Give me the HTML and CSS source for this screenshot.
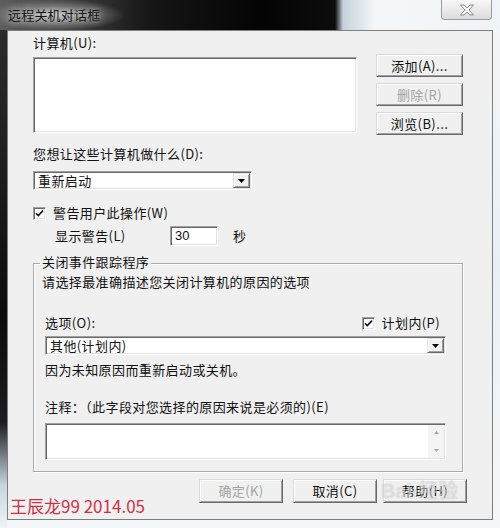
FILE: index.html
```html
<!DOCTYPE html>
<html lang="zh-CN">
<head>
<meta charset="utf-8">
<title>远程关机对话框</title>
<link rel="stylesheet" href="styles.css">
</head>
<body>
<div class="window">
  <div class="titlebar">
    <span class="title">远程关机对话框</span>
    <div class="close">
      <svg width="16" height="12" viewBox="0 0 16 12"><path d="M1.5 1 H5 L8 4 L11 1 H14.5 L10 6 L14.5 11 H11 L8 8 L5 11 H1.5 L6 6 Z" fill="#fbfbfb" stroke="#8a8a8a" stroke-width="1"/></svg>
    </div>
  </div>
  <div class="client">
    <div class="label l-computers">计算机(U):</div>
    <div class="top">
      <div class="listbox"></div>
      <div class="side-buttons">
        <div class="btn side">添加(A)...</div>
        <div class="btn side disabled">删除(R)</div>
        <div class="btn side">浏览(B)...</div>
      </div>
    </div>
    <div class="label l-action">您想让这些计算机做什么(D):</div>
    <div class="combo combo-action">
      <span class="combo-text">重新启动</span>
      <span class="combo-arrow"><svg width="7" height="4" viewBox="0 0 7 4"><path d="M0 0H7L3.5 4Z" fill="#000"/></svg></span>
    </div>
    <div class="check-row warn-row">
      <span class="checkbox"><svg width="9" height="9" viewBox="0 0 9 9"><path d="M1 4.2 L3.3 6.6 L8 1.6" fill="none" stroke="#111" stroke-width="1.6"/></svg></span>
      <span class="label">警告用户此操作(W)</span>
    </div>
    <div class="timeout-row">
      <span class="label timeout-label">显示警告(L)</span>
      <span class="textbox">30</span>
      <span class="label unit">秒</span>
    </div>
    <div class="group">
      <div class="legend">关闭事件跟踪程序</div>
      <div class="label desc">请选择最准确描述您关闭计算机的原因的选项</div>
      <div class="option-row">
        <span class="label">选项(O):</span>
        <span class="check-row planned">
          <span class="checkbox"><svg width="9" height="9" viewBox="0 0 9 9"><path d="M1 4.2 L3.3 6.6 L8 1.6" fill="none" stroke="#111" stroke-width="1.6"/></svg></span>
          <span class="label">计划内(P)</span>
        </span>
      </div>
      <div class="combo combo-reason">
        <span class="combo-text">其他(计划内)</span>
        <span class="combo-arrow"><svg width="7" height="4" viewBox="0 0 7 4"><path d="M0 0H7L3.5 4Z" fill="#000"/></svg></span>
      </div>
      <div class="label reason-desc">因为未知原因而重新启动或关机。</div>
      <div class="label comment-label">注释：（此字段对您选择的原因来说是必须的)(E)</div>
      <div class="memo">
        <div class="memo-scroll">
          <svg width="5" height="3" viewBox="0 0 5 3"><path d="M0 3H5L2.5 0Z" fill="#a8a8a8"/></svg>
          <svg width="5" height="3" viewBox="0 0 5 3"><path d="M0 0H5L2.5 3Z" fill="#a8a8a8"/></svg>
        </div>
      </div>
    </div>
    <div class="bottom-row">
      <span class="signature">王辰龙99 2014.05</span>
      <div class="dialog-buttons">
        <div class="btn dlg disabled">确定(K)</div>
        <div class="btn dlg cancel">取消(C)</div>
        <div class="btn dlg help">帮助(H)</div>
      </div>
    </div>
    <div class="baidu-mark">Bai<span class="paw">●</span>经验</div>
  </div>
</div>
</body>
</html>
```
FILE: styles.css
```css
html, body {
  margin: 0;
  padding: 0;
}

body {
  width: 500px;
  height: 528px;
  overflow: hidden;
  font-family: "Noto Sans CJK SC", "Liberation Sans", sans-serif;
  font-size: 13px;
  color: #111;
}

.window {
  width: 500px;
  height: 528px;
  display: flex;
  flex-direction: column;
  background:
    linear-gradient(180deg, #2e2e2e 0, #1c1c1c 35%, #0b0b0b 60%, #1a1d22 80%, #c9d6df 92%, #eef3f6 100%) 0 0 / 7px 100% no-repeat,
    linear-gradient(180deg, #f3f6f8 0, #e9f0f5 50%, #f4f7f9 100%);
}

.titlebar {
  height: 30px;
  flex: none;
  display: flex;
  align-items: flex-start;
  background:
    radial-gradient(ellipse 70px 16px at 55px 15px, rgba(205, 205, 205, 0.9) 0, rgba(150, 150, 150, 0.55) 55%, rgba(60, 60, 60, 0) 100%),
    linear-gradient(90deg, #5d5d5d 0, #3a3a3a 16%, #161616 30%, #040404 52%, #0c0c0c 67%, #c5d2db 68.6%, #f4f7f9 75%, #eef4f8 100%);
}

.title {
  margin: 7px 0 0 8px;
  font-size: 13px;
  letter-spacing: 0.2px;
  line-height: 16px;
  color: #141414;
  text-shadow: 0 0 6px rgba(235, 235, 235, 0.9);
}

.close {
  margin-left: auto;
  margin-right: 8px;
  width: 51px;
  height: 20px;
  box-sizing: border-box;
  border: 1px solid #9b9b9b;
  border-top: none;
  border-radius: 0 0 4px 4px;
  background: linear-gradient(180deg, #f7f7f7 0, #e9e9e9 55%, #dcdcdc 100%);
  display: flex;
  align-items: center;
  justify-content: center;
}

.client {
  position: relative;
  flex: none;
  height: 490px;
  margin: 0 7px 8px 7px;
  box-sizing: border-box;
  border: 1px solid #7d7d7d;
  background: #f0f0f0;
  padding-left: 25px;
  display: flex;
  flex-direction: column;
  align-items: flex-start;
}

.label {
  line-height: 16px;
  letter-spacing: 0.4px;
  white-space: nowrap;
}

.l-computers { margin-top: 4px; }

.top {
  margin-top: 3px;
  display: flex;
  align-items: flex-start;
}

.listbox {
  margin-top: 3px;
  width: 324px;
  height: 76px;
  box-sizing: border-box;
  background: #fff;
  border: 1px solid;
  border-color: #a0a0a0 #fff #fff #a0a0a0;
  box-shadow: inset 1px 1px #696969, inset -1px -1px #e3e3e3;
}

.side-buttons {
  margin-left: 19px;
  display: flex;
  flex-direction: column;
  gap: 6px;
}

.btn {
  box-sizing: border-box;
  background: #f0f0f0;
  border: 1px solid;
  border-color: #dadada #696969 #696969 #dadada;
  box-shadow: inset 1px 1px #fff, inset -1px -1px #a0a0a0;
  display: flex;
  align-items: center;
  justify-content: center;
  line-height: 16px;
  letter-spacing: 0.4px;
  white-space: nowrap;
}

.btn.side {
  width: 87px;
  height: 23px;
}

.btn.disabled {
  color: #a3a3a3;
}

.l-action { margin-top: 11px; }

.combo {
  box-sizing: border-box;
  height: 19px;
  background: #fff;
  border: 1px solid;
  border-color: #a0a0a0 #fff #fff #a0a0a0;
  box-shadow: inset 1px 1px #696969, inset -1px -1px #e3e3e3;
  display: flex;
  align-items: stretch;
  padding: 1px;
}

.combo-action {
  margin-top: 9px;
  width: 219px;
}

.combo-text {
  flex: 1;
  padding-left: 3px;
  line-height: 16px;
  letter-spacing: 0.4px;
  white-space: nowrap;
}

.combo-arrow {
  width: 17px;
  box-sizing: border-box;
  background: #f0f0f0;
  border: 1px solid;
  border-color: #e3e3e3 #696969 #696969 #e3e3e3;
  box-shadow: inset 1px 1px #fff, inset -1px -1px #a0a0a0;
  display: flex;
  align-items: center;
  justify-content: center;
}

.check-row {
  display: flex;
  align-items: center;
}

.checkbox {
  width: 13px;
  height: 13px;
  box-sizing: border-box;
  background: #fff;
  border: 1px solid;
  border-color: #a0a0a0 #fff #fff #a0a0a0;
  box-shadow: inset 1px 1px #696969, inset -1px -1px #e3e3e3;
  display: flex;
  align-items: center;
  justify-content: center;
  margin-right: 7px;
}

.warn-row { margin-top: 15px; }

.timeout-row {
  margin-top: 5px;
  margin-left: 22px;
  display: flex;
  align-items: center;
  height: 20px;
}

.timeout-label { width: 115px; }

.textbox {
  width: 48px;
  height: 20px;
  box-sizing: border-box;
  background: #fff;
  border: 1px solid;
  border-color: #a0a0a0 #fff #fff #a0a0a0;
  box-shadow: inset 1px 1px #696969, inset -1px -1px #e3e3e3;
  padding: 1px 0 0 4px;
  line-height: 16px;
  font-family: "Liberation Sans", sans-serif;
  font-size: 13px;
}

.unit { margin-left: 15px; }

.group {
  margin-top: 17px;
  width: 430px;
  height: 209px;
  box-sizing: border-box;
  border: 1px solid #a9a9a9;
  box-shadow: inset 1px 1px #fff, 1px 1px #fff;
  padding: 0 16px 0 11px;
  display: flex;
  flex-direction: column;
  align-items: flex-start;
}

.legend {
  margin-top: -10px;
  margin-left: -5px;
  padding: 0 2px;
  background: #f0f0f0;
  line-height: 16px;
  letter-spacing: 0.4px;
}

.desc {
  margin-top: 4px;
  margin-left: -3px;
}

.option-row {
  margin-top: 25px;
  align-self: stretch;
  display: flex;
  justify-content: space-between;
  align-items: center;
  height: 16px;
}

.planned { margin-right: 6px; }

.combo-reason {
  margin-top: 5px;
  align-self: stretch;
}

.reason-desc { margin-top: 7px; }

.comment-label { margin-top: 21px; }

.memo {
  margin-top: 8px;
  align-self: stretch;
  height: 37px;
  box-sizing: border-box;
  background: #fff;
  border: 1px solid;
  border-color: #a0a0a0 #fff #fff #a0a0a0;
  box-shadow: inset 1px 1px #696969, inset -1px -1px #e3e3e3;
  padding: 1px;
  display: flex;
  justify-content: flex-end;
}

.memo-scroll {
  width: 16px;
  background: #f4f4f4;
  display: flex;
  flex-direction: column;
  align-items: center;
  justify-content: space-between;
  padding: 6px 0 6px;
}

.bottom-row {
  margin-top: 7px;
  margin-left: -25px;
  align-self: stretch;
  display: flex;
  align-items: flex-start;
}

.signature {
  margin-left: 2px;
  margin-top: 17px;
  font-size: 17px;
  line-height: 20px;
  color: #cd3047;
  white-space: nowrap;
}

.dialog-buttons {
  margin-left: auto;
  margin-right: 25px;
  display: flex;
}

.btn.dlg {
  width: 84px;
  height: 24px;
}

.btn.cancel { margin-left: 10px; }
.btn.help { margin-left: 6px; }

.baidu-mark {
  position: absolute;
  left: 373px;
  top: 448px;
  font-family: "Liberation Sans", sans-serif;
  font-size: 20px;
  line-height: 24px;
  font-weight: bold;
  color: rgba(255, 255, 255, 0.4);
  text-shadow: 0 0 1px rgba(140, 140, 140, 0.4);
  white-space: nowrap;
  pointer-events: none;
}

.paw {
  font-size: 9px;
  vertical-align: top;
}
```
